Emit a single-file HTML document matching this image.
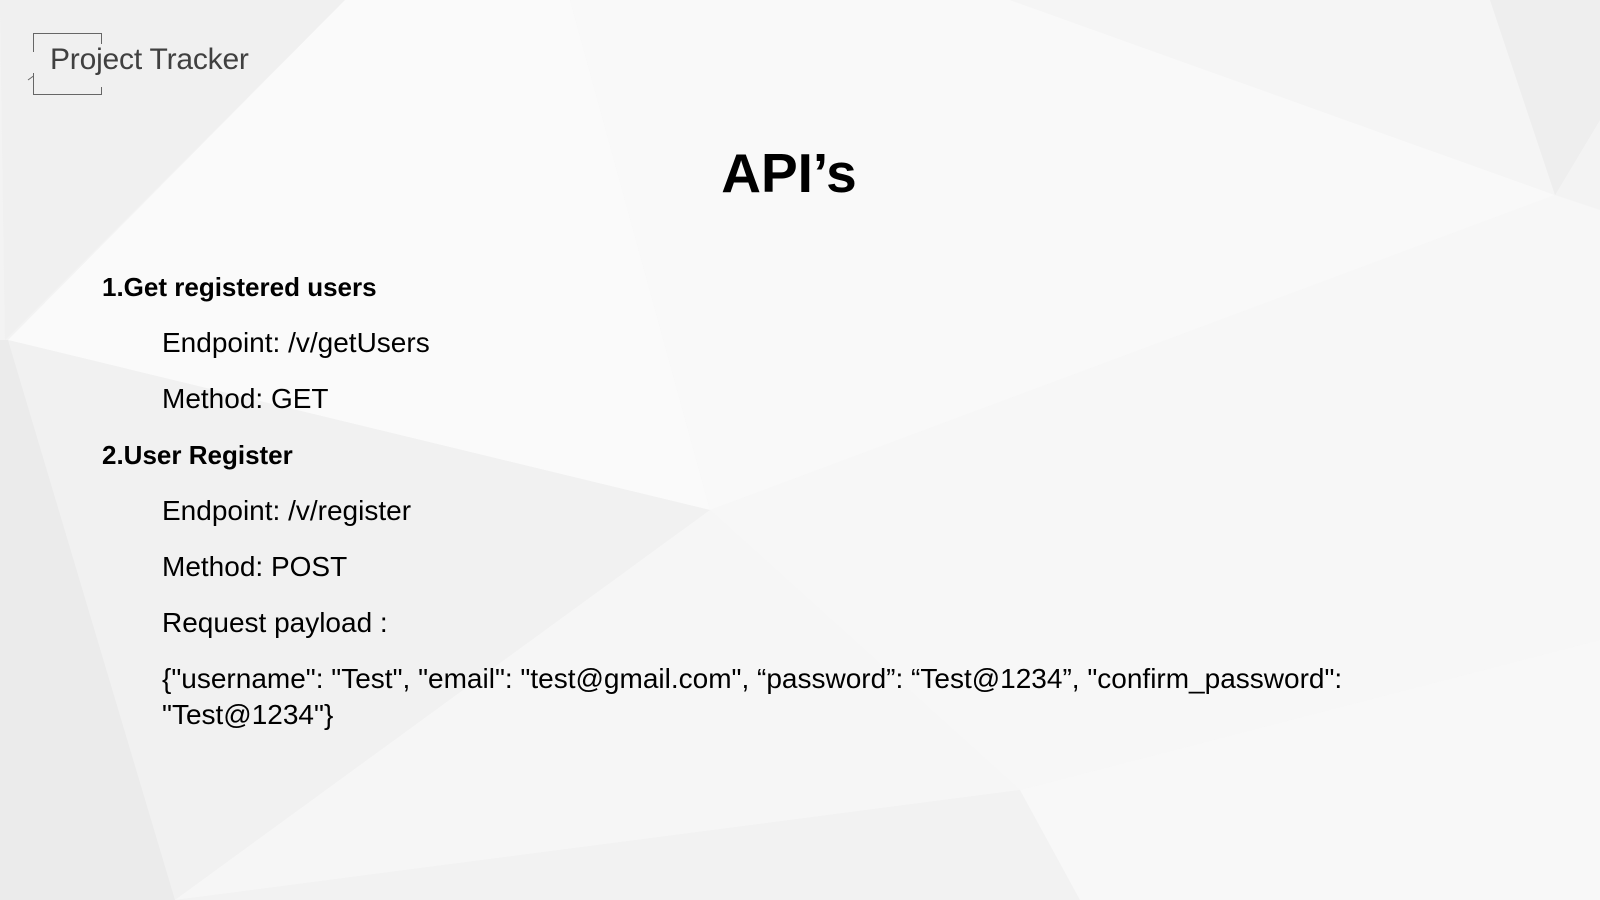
<!DOCTYPE html>
<html><head><meta charset="utf-8"><style>
html,body{margin:0;padding:0;}
body{width:1600px;height:900px;position:relative;overflow:hidden;background:#f4f4f4;font-family:"Liberation Sans",sans-serif;}
svg.bg{position:absolute;left:0;top:0;}
.brand{position:absolute;left:50px;top:43px;font-size:30px;color:#404040;letter-spacing:-0.2px;}
h1{position:absolute;left:0;width:1578px;text-align:center;top:141px;margin:0;font-size:55px;font-weight:bold;color:#000;}
.t{position:absolute;font-size:28px;color:#000;white-space:nowrap;}
.b{font-weight:bold;left:102px;font-size:26px;}
.i{left:162px;}
</style></head><body>
<svg class="bg" width="1600" height="900">
<rect width="1600" height="900" fill="#f3f3f3"/>
<polygon points="0,0 345,0 5,340" fill="#f0f0f0"/>
<polygon points="345,0 570,0 710,510 8,340" fill="#fafafa"/>
<polygon points="570,0 1010,0 1555,195 710,510" fill="#f9f9f9"/>
<polygon points="1010,0 1490,0 1555,195" fill="#f5f5f5"/>
<polygon points="1490,0 1600,0 1600,120 1555,195" fill="#eeeeee"/>
<polygon points="1555,195 1600,210 1600,640 1020,790 710,510" fill="#f7f7f7"/>
<polygon points="8,340 710,510 175,900 0,900" fill="#f1f1f1"/>
<polygon points="0,340 8,340 175,900 0,900" fill="#ebebeb"/>
<polygon points="710,510 1020,790 175,900" fill="#f6f6f6"/>
<polygon points="175,900 1020,790 1080,900" fill="#f2f2f2"/>
<polygon points="1020,790 1600,640 1600,900 1080,900" fill="#f8f8f8"/>
<path d="M33.5,52 V33.5 H101.5 V44 M33.5,76 L28,80 M33.5,73 V94.5 H101.5 V87" fill="none" stroke="#666" stroke-width="1"/>
</svg>
<div class="brand">Project Tracker</div>
<h1>API’s</h1>
<div class="t b" style="top:272px">1.Get registered users</div>
<div class="t i" style="top:327px">Endpoint: /v/getUsers</div>
<div class="t i" style="top:383px">Method: GET</div>
<div class="t b" style="top:440px">2.User Register</div>
<div class="t i" style="top:495px">Endpoint: /v/register</div>
<div class="t i" style="top:551px">Method: POST</div>
<div class="t i" style="top:607px">Request payload :</div>
<div class="t i" style="top:663px">{"username": "Test", "email": "test@gmail.com", “password”: “Test@1234”, "confirm_password":</div>
<div class="t i" style="top:699px">"Test@1234"}</div>
</body></html>
